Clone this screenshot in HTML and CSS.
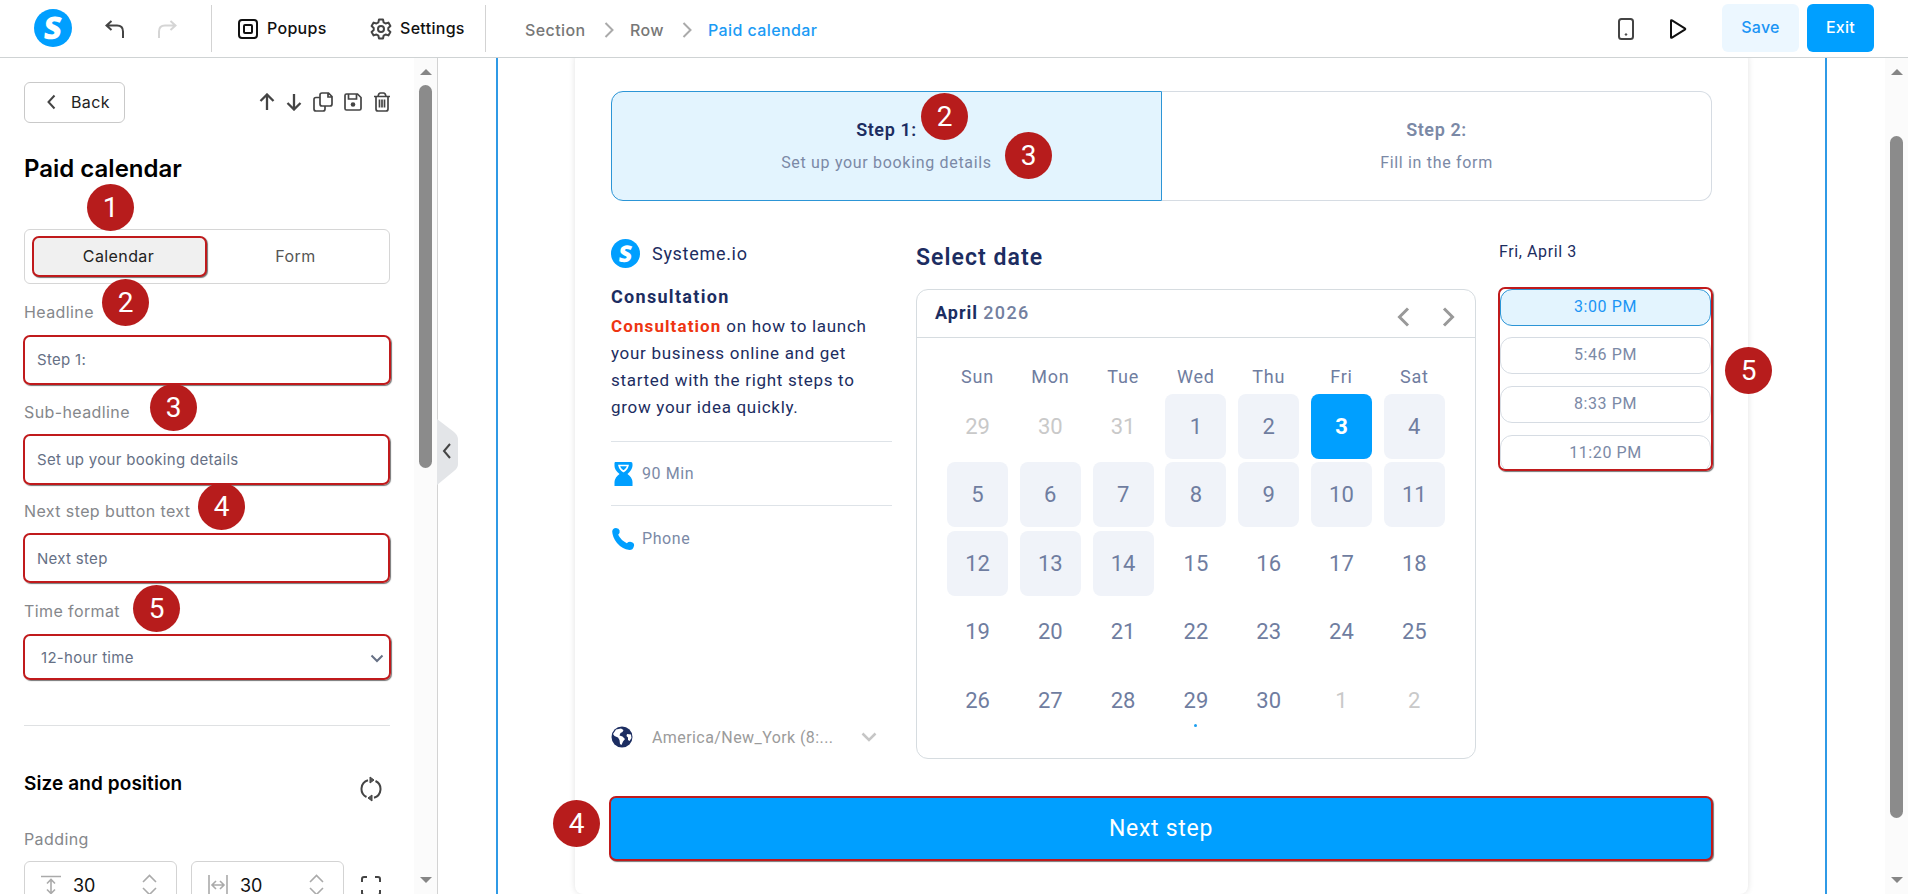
FILE: index.html
```
<!DOCTYPE html>
<html lang="en">
<head>
  <meta charset="UTF-8" />
  <meta name="viewport" content="width=device-width, initial-scale=1.0" />
  <title>Paid calendar</title>
  <link rel="stylesheet" href="styles.css">
</head>
<body>
  <header class="topbar">
    <div class="logo"><span>S</span></div>
    <svg class="undo" width="20" height="20" viewBox="0 0 20 20"><path d="M6.500 2 L1.500 6.500 L6.500 11 M2 6.500 H12 Q18 6.500 18 12.500 V19" /></svg>
    <svg class="redo" width="20" height="20" viewBox="0 0 20 20"><path d="M13.500 2 L18.500 6.500 L13.500 11 M18 6.500 H8 Q2 6.500 2 12.500 V19" /></svg>
    <div class="bar-line"></div>
    <div class="bar-item popups">
      <svg width="20" height="20" viewBox="0 0 20 20"><rect x="1" y="1" width="18" height="18" rx="3" /><rect x="6" y="6" width="8" height="8" rx="1" /></svg>
      <span>Popups</span>
    </div>
    <div class="bar-item settings">
      <svg width="22" height="22" viewBox="0 0 22 22"><path d="M9 1.500 H13 L13.600 4.300 L15.600 5.500 L18.400 4.600 L20.400 8 L18.300 9.900 V12.100 L20.400 14 L18.400 17.400 L15.600 16.500 L13.600 17.700 L13 20.500 H9 L8.400 17.700 L6.400 16.500 L3.600 17.400 L1.600 14 L3.700 12.100 V9.900 L1.600 8 L3.600 4.600 L6.400 5.500 L8.400 4.300 Z" /><circle cx="11" cy="11" r="3" /></svg>
      <span>Settings</span>
    </div>
    <div class="bar-line"></div>
    <nav class="crumbs">
      <span class="crumb-section">Section</span>
      <svg width="10" height="16" viewBox="0 0 10 16"><path d="M1.500 1 L8.500 8 L1.500 15" /></svg>
      <span class="crumb-row">Row</span>
      <svg width="10" height="16" viewBox="0 0 10 16"><path d="M1.500 1 L8.500 8 L1.500 15" /></svg>
      <span class="current">Paid calendar</span>
    </nav>
    <div class="bar-right">
      <svg class="device" width="16" height="22" viewBox="0 0 16 22"><rect x="1" y="1" width="14" height="20" rx="2.500" /><circle cx="8" cy="16.500" r=".8" /></svg>
      <svg class="play" width="18" height="20" viewBox="0 0 18 20"><path d="M2 1.800 Q2 .8 3 1.400 L15.800 9.300 Q16.800 10 15.800 10.700 L3 18.600 Q2 19.200 2 18.200 Z" /></svg>
      <button class="save">Save</button>
      <button class="exit">Exit</button>
    </div>
  </header>

  <div class="workspace">
    <aside class="sidebar">
      <div class="panel">
        <div class="panel-top">
          <button class="back">
            <svg width="9" height="16" viewBox="0 0 9 16"><path d="M7.500 1.500 L1.500 8 L7.500 14.500" /></svg>
            <span>Back</span>
          </button>
          <div class="tools">
            <svg width="16" height="18" viewBox="0 0 16 18"><path class="bold" d="M8 17 V2 M1.500 8 L8 1.500 L14.500 8" /></svg>
            <svg width="16" height="18" viewBox="0 0 16 18"><path class="bold" d="M8 1 V16 M1.500 10 L8 16.500 L14.500 10" /></svg>
            <svg width="20" height="20" viewBox="0 0 20 20"><path d="M9 1 H15.500 L19 4.500 V12 Q19 14 17 14 H9 Q7 14 7 12 V3 Q7 1 9 1 Z M15 1 V5 H19 M7 5.500 H3 Q1 5.500 1 7.500 V17 Q1 19 3 19 H10 Q12 19 12 17 V14" /></svg>
            <svg width="18" height="18" viewBox="0 0 18 18"><path d="M2.500 1 H13.500 L17 4.500 V15.500 Q17 17 15.500 17 H2.500 Q1 17 1 15.500 V2.500 Q1 1 2.500 1 Z M4.500 1 V6 H12.500 V1" /><circle class="dot" cx="9" cy="11.500" r="2.300" /></svg>
            <svg width="18" height="20" viewBox="0 0 18 20"><path d="M1 4.500 H17 M3 4.500 V17 Q3 19 5 19 H13 Q15 19 15 17 V4.500 M5 4.500 Q5.500 1 7.500 1 H10.500 Q12.500 1 13 4.500 M6.500 7.500 V15.500 M9 7.500 V15.500 M11.500 7.500 V15.500" /></svg>
          </div>
        </div>

        <h1>Paid calendar</h1>

        <div class="tabs">
          <div class="tab active marked">Calendar</div>
          <div class="tab">Form</div>
        </div>

        <div class="field headline">
          <label>Headline</label>
          <div class="input marked wide">Step 1:</div>
        </div>
        <div class="field sub-headline">
          <label>Sub-headline</label>
          <div class="input marked">Set up your booking details</div>
        </div>
        <div class="field button-text">
          <label>Next step button text</label>
          <div class="input marked">Next step</div>
        </div>
        <div class="field time-format">
          <label>Time format</label>
          <div class="input marked wide select">
            <span>12-hour time</span>
            <svg width="14" height="9" viewBox="0 0 14 9"><path d="M1.500 1.500 L7 7 L12.500 1.500" /></svg>
          </div>
        </div>

        <div class="size-head">
          <h2>Size and position</h2>
          <svg width="22" height="26" viewBox="0 0 22 26"><path d="M8 4.300 A9 9 0 0 0 6.500 21 M14 21.700 A9 9 0 0 0 15.500 5" /><path class="tip" d="M14 4 L10 1 V7 Z M8 22 L12 19 V25 Z" /></svg>
        </div>
        <label class="padding-label">Padding</label>
        <div class="paddings">
          <div class="stepper">
            <svg width="20" height="20" viewBox="0 0 20 20"><path d="M0 1.500 H20 M10 5 V18 M6 8.500 L10 4.500 L14 8.500 M6 14.500 L10 18.500 L14 14.500" /></svg>
            <span>30</span>
            <svg class="arrows" width="15" height="22" viewBox="0 0 15 22"><path d="M1 8 L7.500 1.500 L14 8 M1 14 L7.500 20.500 L14 14" /></svg>
          </div>
          <div class="stepper">
            <svg width="20" height="20" viewBox="0 0 20 20"><path d="M1 0 V20 M19 0 V20 M4 10 H16 M8 6 L4 10 L8 14 M12 6 L16 10 L12 14" /></svg>
            <span>30</span>
            <svg class="arrows" width="15" height="22" viewBox="0 0 15 22"><path d="M1 8 L7.500 1.500 L14 8 M1 14 L7.500 20.500 L14 14" /></svg>
          </div>
          <svg class="corners" width="20" height="20" viewBox="0 0 20 20"><path d="M1 6 V3 Q1 1 3 1 H6 M14 1 H17 Q19 1 19 3 V6 M1 14 V17 Q1 19 3 19 H6 M14 19 H17 Q19 19 19 17 V14" /></svg>
        </div>
      </div>
      <div class="scrollbar">
        <i class="up"></i>
        <div class="thumb side-thumb"></div>
        <i class="down"></i>
      </div>
      <svg class="collapse" width="22" height="66" viewBox="0 0 22 66"><path class="shape" d="M0 0 L17 13 Q21 16 21 21 V45 Q21 49 17 52 L0 66 Z" /><path class="arrow" d="M13 25 L7 32 L13 39" /></svg>
    </aside>

    <main class="canvas">
      <div class="section">
        <div class="card">
          <div class="steps">
            <div class="step current">
              <strong>Step 1:</strong>
              <span>Set up your booking details</span>
            </div>
            <div class="step">
              <strong>Step 2:</strong>
              <span>Fill in the form</span>
            </div>
          </div>

          <div class="booking">
            <div class="info">
              <div class="owner"><div class="logo small"><span>S</span></div><span>Systeme.io</span></div>
              <h3>Consultation</h3>
              <p><b>Consultation</b> on how to launch<br>your business online and get<br>started with the right steps to<br>grow your idea quickly.</p>
              <div class="meta">
                <svg width="24" height="26" viewBox="0 0 24 26"><path d="M4 1 H20 Q21.500 1 21.500 3 V5 Q21 9 16.500 13 Q21 16 21.500 21 V25 H3.500 V21 Q4 16 8.500 13 Q3.500 9 3.500 5 V2 Z" /><path class="glass" d="M8 4.500 H17 Q16 8.500 12.500 10.500 Q9 8.500 8 4.500 Z" /></svg>
                <span>90 Min</span>
              </div>
              <div class="meta phone">
                <svg width="24" height="24" viewBox="0 0 24 24"><path d="M1.200 4.500 Q1.500 1 5 1 Q8 1 8.600 3.500 Q9.200 6 7.200 7.800 Q10 13.500 15.800 16.200 Q18 14.200 21 15.200 Q24 16.500 22.800 19.500 Q22 23 18.500 23 Q11 22 6 16 Q1.500 10.500 1.200 4.500 Z" /></svg>
                <span>Phone</span>
              </div>
              <div class="zone">
                <svg width="22" height="22" viewBox="0 0 22 22"><circle cx="11" cy="11" r="10.500" /><path d="M2 8 L5 3.500 L10 2.500 L12.500 4 L11.500 6 L9.500 7 L8.500 9.500 L11.500 10.500 L14 13 L12 15.500 L10.500 19 L9 18 L8.500 14 L7 11.500 L3.500 10 Z M16 8 L20 8.500 L20.500 12 L18.500 15 L17 14 L17 11.500 L15.500 10 Z" /></svg>
                <span>America/New_York (8:...</span>
                <svg class="drop" width="16" height="10" viewBox="0 0 16 10"><path d="M1.500 1.500 L8 8 L14.500 1.500" /></svg>
              </div>
            </div>

            <div class="date">
              <h2>Select date</h2>
              <div class="calendar">
                <div class="month">
                  <div><b>April</b> <span>2026</span></div>
                  <svg width="13" height="20" viewBox="0 0 13 20"><path d="M11 1.500 L2.500 10 L11 18.500" /></svg>
                  <svg width="13" height="20" viewBox="0 0 13 20"><path d="M2 1.500 L10.500 10 L2 18.500" /></svg>
                </div>
                <div class="weekdays">
                  <span>Sun</span><span>Mon</span><span>Tue</span><span>Wed</span><span>Thu</span><span>Fri</span><span>Sat</span>
                </div>
                <div class="days">
                  <span class="out">29</span><span class="out">30</span><span class="out">31</span><span class="free">1</span><span class="free">2</span><span class="picked">3</span><span class="free">4</span>
                  <span class="free">5</span><span class="free">6</span><span class="free">7</span><span class="free">8</span><span class="free">9</span><span class="free">10</span><span class="free">11</span>
                  <span class="free">12</span><span class="free">13</span><span class="free">14</span><span>15</span><span>16</span><span>17</span><span>18</span>
                  <span>19</span><span>20</span><span>21</span><span>22</span><span>23</span><span>24</span><span>25</span>
                  <span>26</span><span>27</span><span>28</span><span class="today">29</span><span>30</span><span class="out">1</span><span class="out">2</span>
                </div>
              </div>
            </div>

            <div class="times">
              <div class="day-name">Fri, April 3</div>
              <div class="slots marked">
                <div class="slot chosen">3:00 PM</div>
                <div class="slot">5:46 PM</div>
                <div class="slot">8:33 PM</div>
                <div class="slot">11:20 PM</div>
              </div>
            </div>
          </div>

          <button class="next marked">Next step</button>
        </div>
      </div>
      <div class="scrollbar">
        <i class="up"></i>
        <div class="thumb main-thumb"></div>
        <i class="down"></i>
      </div>
    </main>
  </div>

  <!-- numbered markers -->
  <div class="badge tab-badge">1</div>
  <div class="badge headline-badge">2</div>
  <div class="badge sub-badge">3</div>
  <div class="badge button-badge">4</div>
  <div class="badge format-badge">5</div>
  <div class="badge step-badge">2</div>
  <div class="badge details-badge">3</div>
  <div class="badge next-badge">4</div>
  <div class="badge times-badge">5</div>
</body>
</html>
```

FILE: styles.css
```
* {
  margin: 0;
  padding: 0;
  box-sizing: border-box;
}
body {
  position: relative;
  width: 1908px;
  height: 894px;
  overflow: hidden;
  background: #fff;
  color: #111;
  font-family: Inter, "Liberation Sans", sans-serif;
  font-size: 16px;
}
svg {
  display: block;
  flex: none;
  fill: none;
  stroke: #444;
  stroke-width: 2;
}
button {
  border: none;
  font-family: inherit;
  font-size: 16px;
  cursor: pointer;
}

/* top bar */
.topbar {
  display: flex;
  align-items: center;
  height: 58px;
  padding-left: 34px;
  border-bottom: 1px solid #cfd3d4;
}
.logo {
  width: 38px;
  height: 38px;
  margin-top: -1px;
  border-radius: 50%;
  background: #009fff;
  color: #fff;
  font: 800 31px/37px "Open Sans", sans-serif;
  text-align: center;
}
.logo span {
  display: block;
  transform: skewX(-6deg);
}
.undo {
  margin: 1px 0 0 33px;
}
.redo {
  margin: 1px 34px 0 32px;
  stroke: #d5d5d5;
}
.bar-line {
  width: 1px;
  height: 47px;
  background: #d3d3d3;
}
.bar-item {
  display: flex;
  align-items: center;
  font-weight: 500;
  letter-spacing: 0.3px;
}
.bar-item svg {
  margin-top: 1px;
}
.bar-item span {
  margin-top: -2px;
}
.popups {
  width: 132px;
  padding-left: 26px;
  gap: 9px;
}
.popups svg {
  stroke: #111;
}
.settings {
  width: 141px;
  padding-left: 26px;
  gap: 8px;
}
.settings svg {
  stroke-linejoin: round;
}
.crumbs {
  display: flex;
  align-items: center;
  margin-left: 39px;
  padding-top: 2px;
  color: #777;
  letter-spacing: 0.4px;
}
.crumbs span {
  font-weight: 500;
}
.crumbs svg {
  stroke: #aaa;
}
.crumb-section {
  width: 79px;
}
.crumb-row {
  width: 52px;
  margin-left: 16px;
}
.crumbs .current {
  margin-left: 16px;
  color: #1b9bf5;
}
.bar-right {
  display: flex;
  align-items: center;
  margin: 0 34px 0 auto;
}
.device circle {
  fill: #444;
  stroke-width: 1;
}
.play {
  margin: 1px 35px 0;
  stroke: #111;
}
.save,
.exit {
  height: 48px;
  margin-top: -1px;
  border-radius: 6px;
  font-weight: 500;
  padding-bottom: 3px;
}
.save {
  width: 77px;
  margin-right: 8px;
  background: #ecf7ff;
  color: #1b95f5;
  letter-spacing: 0.3px;
}
.exit {
  width: 67px;
  background: #009fff;
  color: #fff;
  letter-spacing: 0.3px;
}

.workspace {
  display: flex;
  height: 836px;
}

/* red frames */
.marked {
  border: 2px solid #c01a1c;
  border-radius: 7px;
  box-shadow: 1px 1px 1px #777;
}

/* sidebar */
.sidebar {
  position: relative;
  display: flex;
  justify-content: space-between;
  width: 438px;
  border-right: 1px solid #d3d3d3;
}
.panel {
  width: 396px;
  height: 836px;
  padding: 24px 6px 0 24px;
  overflow: hidden;
}
.panel-top {
  display: flex;
  justify-content: space-between;
  align-items: center;
}
.back {
  display: flex;
  align-items: center;
  gap: 15px;
  width: 101px;
  height: 41px;
  padding: 0 0 2px 22px;
  background: #fff;
  border: 1px solid #c9c9c9;
  border-radius: 6px;
  color: #222;
  letter-spacing: 0.4px;
}
.tools {
  display: flex;
  align-items: center;
  gap: 11px;
  margin: -2px -1px 0 0;
}
.tools svg {
  stroke-width: 1.7;
}
.tools .bold {
  stroke-width: 2.3;
}
.tools .dot {
  fill: #444;
  stroke: none;
}
.panel h1 {
  margin: 31px 0 46px;
  font-size: 24px;
  font-weight: 600;
  line-height: 29px;
  color: #000;
}
.tabs {
  display: flex;
  height: 55px;
  padding: 6px 7px;
  border: 1px solid #d6d6d6;
  border-radius: 6px;
}
.tab {
  flex: 1;
  height: 41px;
  line-height: 41px;
  padding-left: 2px;
  text-align: center;
  color: #555;
  letter-spacing: 0.4px;
}
.tab.active {
  flex: none;
  width: 175px;
  padding: 0 2px 0 0;
  line-height: 37px;
  background: #f0f0f0;
  color: #222;
}
.field label,
.padding-label {
  display: block;
  height: 20px;
  line-height: 20px;
  color: #85878b;
  letter-spacing: 0.4px;
}
.headline {
  margin-top: 18px;
}
.input {
  display: flex;
  align-items: center;
  width: 367px;
  height: 51px;
  margin: 13px 0 0 -1px;
  padding: 0 0 1px 12px;
  font-size: 15px;
  color: #667085;
  letter-spacing: 0.3px;
}
.input.wide {
  width: 368px;
}
.headline .input {
  height: 50px;
}
.sub-headline,
.button-text {
  margin-top: 17px;
}
.sub-headline .input {
  margin-top: 12px;
}
.button-text {
  margin-top: 16px;
}
.button-text .input {
  height: 50px;
  margin-top: 12px;
  padding-bottom: 0;
}
.time-format {
  margin-top: 18px;
}
.select,
.time-format .input {
  height: 46px;
  margin-top: 13px;
  padding: 0 5px 0 16px;
  justify-content: space-between;
}
.select svg {
  stroke: #667085;
  margin-top: 3px;
}
.size-head {
  display: flex;
  justify-content: space-between;
  height: 104px;
  margin-top: 45px;
  padding: 46px 8px 0 0;
  border-top: 1px solid #dfe1e3;
}
.size-head h2 {
  font-size: 19px;
  line-height: 23px;
  font-weight: 600;
  letter-spacing: 0.1px;
  color: #000;
}
.size-head svg {
  margin-top: 4px;
}
.size-head .tip {
  fill: #555;
  stroke-width: 1;
}
.paddings {
  display: flex;
  margin-top: 12px;
}
.stepper {
  display: flex;
  align-items: center;
  width: 153px;
  height: 48px;
  margin-right: 14px;
  padding: 0 19px 0 16px;
  border: 1px solid #d3d3d3;
  border-radius: 6px;
  font-size: 18px;
  color: #111;
}
.stepper svg {
  stroke: #aaa;
  stroke-width: 1.6;
}
.stepper span {
  margin: 0 auto 0 12px;
}
.corners {
  margin: 15px 0 0 3px;
}
.scrollbar {
  display: flex;
  flex-direction: column;
  align-items: center;
  width: 23px;
  height: 836px;
  padding: 11px 0;
  background: #fbfbfb;
}
.sidebar .scrollbar {
  margin-left: -6px;
}
.up,
.down {
  border: 6px solid transparent;
  border-top: none;
  border-bottom: 6px solid #868686;
}
.down {
  margin-top: auto;
  border-bottom: none;
  border-top: 6px solid #868686;
}
.thumb {
  width: 13px;
  margin-top: 10px;
  border-radius: 7px;
  background: #8b8b8b;
}
.side-thumb {
  height: 383px;
}
.main-thumb {
  height: 682px;
  margin-top: 61px;
}
.collapse {
  position: absolute;
  left: 437px;
  top: 361px;
}
.collapse .shape {
  fill: #e3e5e8;
  stroke: none;
}

/* page canvas */
.canvas {
  display: flex;
  flex: 1;
  justify-content: space-between;
  padding-left: 58px;
  overflow: hidden;
  font-family: Roboto, "Liberation Sans", sans-serif;
  letter-spacing: 0.6px;
  color: #1c2d61;
}
.section {
  width: 1331px;
  padding: 0 77px;
  border: solid #2f9ae6;
  border-width: 0 2px;
}
.card {
  width: 1173px;
  height: 842px;
  margin-top: -6px;
  padding: 39px 36px 0;
  border-radius: 8px;
  box-shadow: 0 0 6px rgba(0, 0, 0, 0.12);
}
.steps {
  display: flex;
  height: 110px;
}
.step {
  flex: 1;
  padding: 26px 0 0;
  border: 1px solid #d6dce3;
  border-left: none;
  border-radius: 0 12px 12px 0;
  text-align: center;
  color: #7b89a6;
}
.step.current {
  background: #e3f4fe;
  border: 1px solid #2c95d6;
  border-radius: 12px 0 0 12px;
}
.step strong {
  display: block;
  line-height: 24px;
  font-size: 18px;
  font-weight: 600;
}
.step.current strong {
  color: #1c2d61;
}
.step span {
  display: block;
  margin-top: 10px;
  line-height: 22px;
  letter-spacing: 0.68px;
}
.booking {
  display: flex;
  height: 595px;
  padding-top: 38px;
}
.info {
  display: flex;
  flex: none;
  flex-direction: column;
  width: 281px;
}
.owner {
  display: flex;
  align-items: center;
  gap: 12px;
  font-size: 18px;
}
.owner > span {
  margin-top: -1px;
  letter-spacing: 0.7px;
}
.logo.small {
  width: 29px;
  height: 29px;
  margin: 0;
  font-size: 23px;
  line-height: 28px;
  letter-spacing: 0;
}
.info h3 {
  margin: 17px 0 4px;
  font-size: 18px;
  line-height: 24px;
  letter-spacing: 1.3px;
}
.info p {
  font-size: 17px;
  line-height: 27px;
  padding-bottom: 20px;
  border-bottom: 1px solid #dee3e8;
  white-space: nowrap;
  letter-spacing: 0.7px;
}
.info p b {
  color: #ee3512;
  letter-spacing: 1.1px;
}
.meta {
  display: flex;
  align-items: center;
  gap: 7px;
  height: 64px;
  border-bottom: 1px solid #dee3e8;
  color: #7b89a6;
}
.meta svg {
  fill: #009fff;
  stroke: none;
}
.meta .glass {
  stroke: #fff;
  stroke-width: 1.5;
}
.meta.phone {
  height: 65px;
  border: none;
}
.zone {
  display: flex;
  align-items: center;
  margin-top: 155px;
  color: #9b9b9b;
  letter-spacing: 0.42px;
}
.zone span {
  width: 209px;
  margin-left: 19px;
}
.zone circle {
  fill: #1c2d61;
  stroke: none;
}
.zone path {
  fill: #fff;
  stroke: none;
}
.zone .drop path {
  fill: none;
  stroke: #c6c6c6;
  stroke-width: 2.5;
}
.date {
  flex: none;
  width: 560px;
  margin-left: 24px;
}
.date h2 {
  margin: 4px 0 16px 0;
  font-size: 23px;
  line-height: 30px;
  font-weight: 600;
  letter-spacing: 1.05px;
}
.calendar {
  height: 470px;
  border: 1px solid #d6dce0;
  border-radius: 12px;
}
.month {
  display: flex;
  align-items: center;
  height: 48px;
  padding: 0 20px 0 18px;
  border-bottom: 1px solid #d6dce0;
  font-size: 18px;
}
.month div {
  margin: -2px auto 0 0;
}
.month b {
  letter-spacing: 1px;
}
.month span {
  color: #73809f;
  font-weight: 500;
  letter-spacing: 1.4px;
}
.month svg {
  margin: 6px 0 0;
  stroke: #999;
  stroke-width: 3;
}
.month svg:last-child {
  margin-left: 32px;
}
.weekdays,
.days {
  display: grid;
  grid-template-columns: repeat(7, 61px);
  column-gap: 11.8px;
  margin-left: 30px;
  text-align: center;
  color: #6f7da0;
}
.weekdays {
  height: 56px;
  padding-top: 27px;
  font-size: 18px;
  line-height: 24px;
  letter-spacing: 0.8px;
}
.days {
  grid-auto-rows: 65px;
  row-gap: 3.4px;
  font-size: 22px;
  line-height: 66px;
  letter-spacing: 0;
}
.days span {
  border-radius: 8px;
}
.days .out {
  color: #c9c9c9;
}
.days .free {
  background: #f0f3f9;
}
.days .picked {
  background: #009fff;
  color: #fff;
  font-weight: 700;
  line-height: 65px;
}
.days .today {
  position: relative;
}
.today::after {
  content: "";
  position: absolute;
  left: 29px;
  bottom: 6px;
  width: 3px;
  height: 3px;
  border-radius: 50%;
  background: #1c9ff0;
}
.times {
  flex: none;
  margin-left: 22px;
}
.day-name {
  height: 48px;
  margin-left: 1px;
  line-height: 26px;
}
.slots {
  display: flex;
  flex-direction: column;
  gap: 12px;
  width: 215px;
  height: 184px;
  overflow: hidden;
}
.slot {
  flex: none;
  height: 37px;
  margin-top: -0.3px;
  border: 1px solid #d6dce3;
  border-radius: 12px;
  line-height: 34px;
  text-align: center;
  color: #7b89a6;
}
.slot.chosen {
  background: #e3f4fe;
  border-color: #2c95d6;
  color: #1b95f5;
}
.next {
  display: block;
  width: 1104px;
  height: 65px;
  margin-left: -2px;
  background: #009fff;
  color: #fff;
  font-size: 23px;
  letter-spacing: 0.7px;
}

/* markers sit over the panels */
.badge {
  position: absolute;
  width: 47px;
  height: 47px;
  border-radius: 50%;
  background: #b71c1c;
  color: #fff;
  font: 400 28px/47px Roboto, sans-serif;
  text-align: center;
}
.tab-badge {
  left: 87px;
  top: 184px;
}
.headline-badge {
  left: 102px;
  top: 279px;
}
.sub-badge {
  left: 150px;
  top: 384px;
}
.button-badge {
  left: 198px;
  top: 483px;
}
.format-badge {
  left: 133px;
  top: 585px;
}
.step-badge {
  left: 921px;
  top: 93px;
}
.details-badge {
  left: 1005px;
  top: 132px;
}
.next-badge {
  left: 553px;
  top: 800px;
}
.times-badge {
  left: 1725px;
  top: 347px;
}
```
